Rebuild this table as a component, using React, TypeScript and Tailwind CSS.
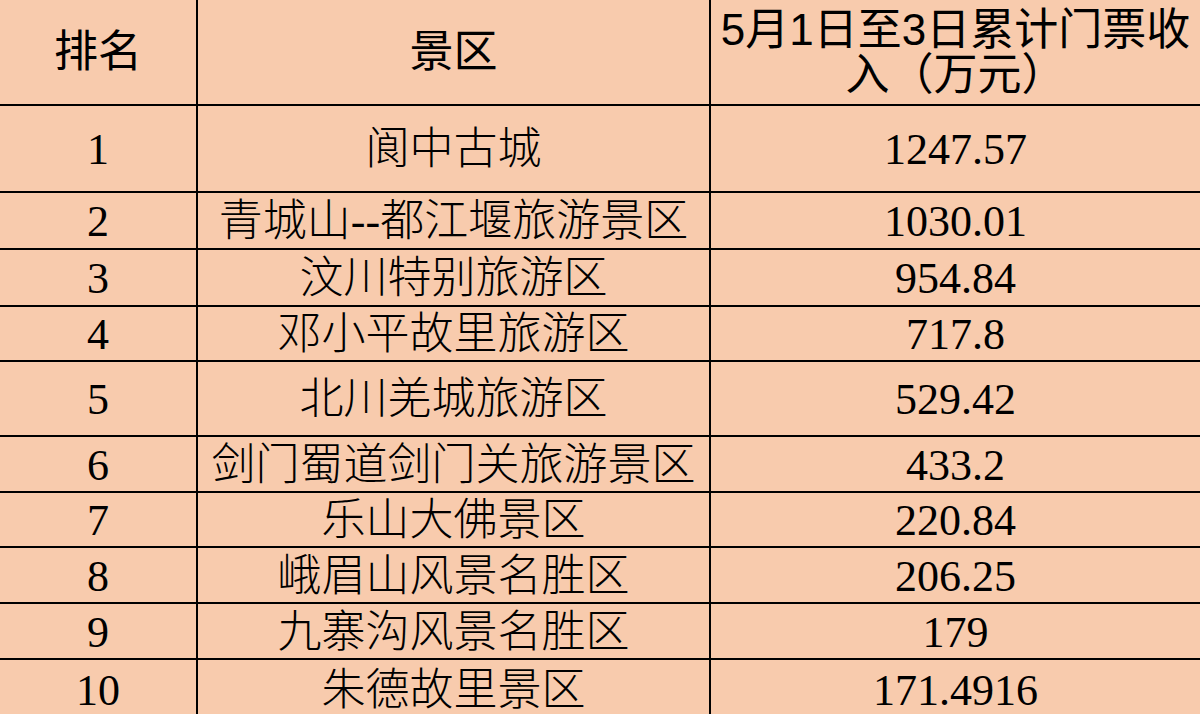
const rows = [
  { rank: "1", name: "阆中古城", value: "1247.57", h: "h-[87px]" },
  { rank: "2", name: "青城山--都江堰旅游景区", value: "1030.01", h: "h-[57px]" },
  { rank: "3", name: "汶川特别旅游区", value: "954.84", h: "h-[57px]" },
  { rank: "4", name: "邓小平故里旅游区", value: "717.8", h: "h-[55px]" },
  { rank: "5", name: "北川羌城旅游区", value: "529.42", h: "h-[75px]" },
  { rank: "6", name: "剑门蜀道剑门关旅游景区", value: "433.2", h: "h-[56px]" },
  { rank: "7", name: "乐山大佛景区", value: "220.84", h: "h-[55px]" },
  { rank: "8", name: "峨眉山风景名胜区", value: "206.25", h: "h-[56px]" },
  { rank: "9", name: "九寨沟风景名胜区", value: "179", h: "h-[56px]" },
  { rank: "10", name: "朱德故里景区", value: "171.4916", h: "h-[58px]" },
];

const headFont = "font-['Liberation_Sans','Noto_Sans_CJK_SC',sans-serif]";
const bodyFont = "font-['Liberation_Serif','Noto_Sans_CJK_SC',serif]";

export default function App() {
  return (
    <div className="w-[1200px] h-[714px] overflow-hidden bg-[#f8cbad] text-black">
      {/* header */}
      <div className={`grid grid-cols-[198px_513px_1fr] h-[106px] border-b-2 border-black ${headFont} text-[44px] font-normal`}>
        <div className="flex items-center justify-center border-r-2 border-black leading-none">排名</div>
        <div className="flex items-center justify-center border-r-2 border-black leading-none">景区</div>
        <div className="flex items-center justify-center text-center leading-[45px]">
          <span>
            5月1日至3日累计门票收
            <br />
            入（万元）
          </span>
        </div>
      </div>

      {rows.map((r, i) => (
        <div
          key={r.rank}
          className={`grid grid-cols-[198px_513px_1fr] ${r.h} ${i < rows.length - 1 ? "border-b-2 border-black" : ""} ${bodyFont} text-[44px] leading-none`}
        >
          <div className="flex items-center justify-center border-r-2 border-black pt-[3px]">{r.rank}</div>
          <div className="flex items-center justify-center border-r-2 border-black whitespace-nowrap font-light pt-[3px]">{r.name}</div>
          <div className="flex items-center justify-center pt-[3px]">{r.value}</div>
        </div>
      ))}
    </div>
  );
}
